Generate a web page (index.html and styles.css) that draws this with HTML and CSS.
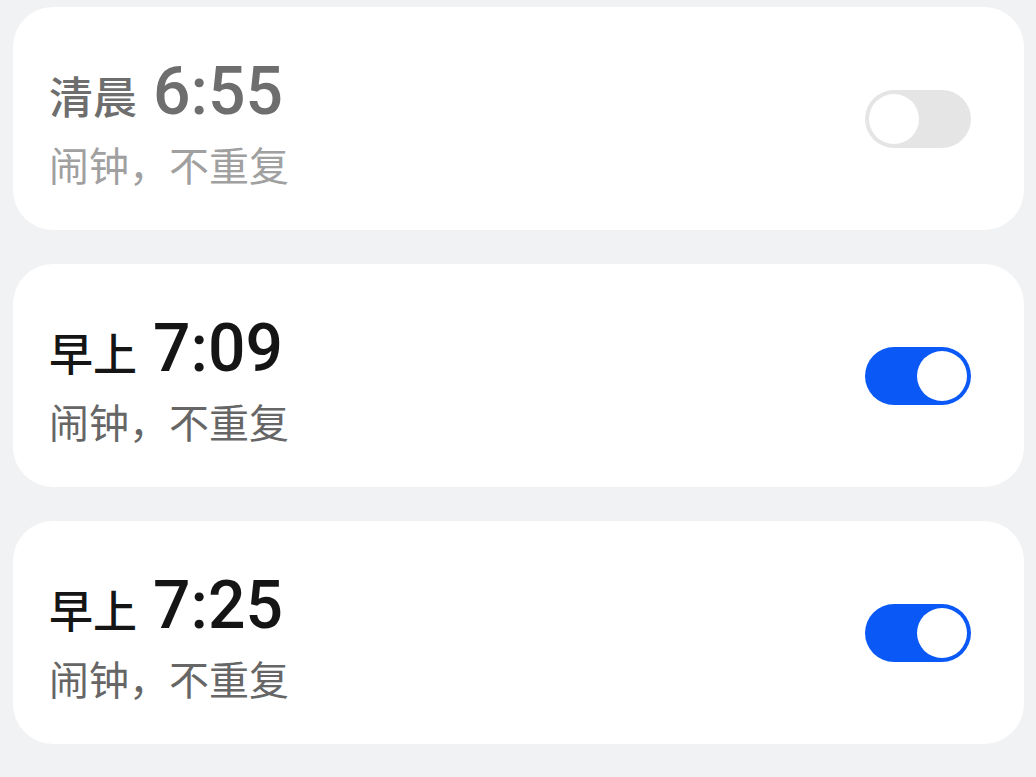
FILE: index.html
```html
<!DOCTYPE html>
<html>
<head>
  <meta charset="utf-8">
  <title>闹钟</title>
  <link rel="stylesheet" href="styles.css">
</head>
<body>
  <div class="list">
    <div class="card off">
      <div class="info">
        <div class="title"><span class="period">清晨</span><span class="time">6:55</span></div>
        <div class="sub">闹钟，不重复</div>
      </div>
      <div class="switch"><div class="knob"></div></div>
    </div>
    <div class="card">
      <div class="info">
        <div class="title"><span class="period">早上</span><span class="time">7:09</span></div>
        <div class="sub">闹钟，不重复</div>
      </div>
      <div class="switch on"><div class="knob"></div></div>
    </div>
    <div class="card">
      <div class="info">
        <div class="title"><span class="period">早上</span><span class="time">7:25</span></div>
        <div class="sub">闹钟，不重复</div>
      </div>
      <div class="switch on"><div class="knob"></div></div>
    </div>
  </div>
</body>
</html>
```

FILE: styles.css
```css
body {
  margin: 0;
  background-color: #f1f2f4;
  font-family: "Noto Sans CJK SC", "Noto Sans", sans-serif;
}

.list {
  display: flex;
  flex-direction: column;
  gap: 34px;
  padding: 7px 12px 0 13px;
}

.card {
  height: 223px;
  background-color: #fff;
  border-radius: 40px;
  display: flex;
  align-items: center;
  justify-content: space-between;
  padding: 0 53px 0 36px;
}

.info {
  display: flex;
  flex-direction: column;
  margin-top: 10px;
}

.title {
  display: flex;
  align-items: baseline;
  color: #151515;
  height: 72px;
}

.period {
  font-size: 44px;
  font-weight: 500;
  margin-right: 16px;
}

.time {
  font-family: Roboto, "Noto Sans", sans-serif;
  font-size: 66px;
  font-weight: 500;
}

.sub {
  font-size: 40px;
  color: #666;
  line-height: 62px;
  margin-top: 8px;
}

.off .title {
  color: #6e6e6e;
}

.off .sub {
  color: #a0a0a0;
}

.switch {
  width: 106px;
  height: 58px;
  border-radius: 29px;
  background-color: #e5e5e5;
  display: flex;
  align-items: center;
  padding: 0 4px;
  box-sizing: border-box;
}

.switch.on {
  background-color: #0a59f7;
  justify-content: flex-end;
}

.knob {
  width: 50px;
  height: 50px;
  border-radius: 50%;
  background-color: #fff;
}
```
